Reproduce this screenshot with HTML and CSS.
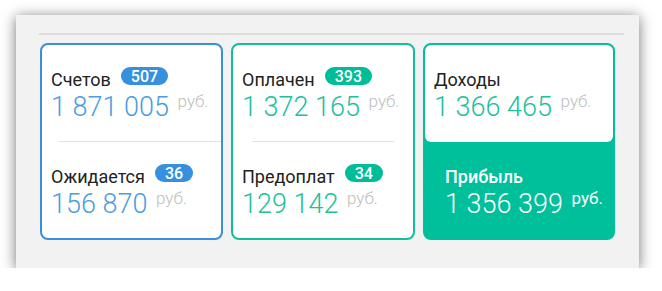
FILE: index.html
```html
<!DOCTYPE html>
<html lang="ru">
<head>
    <meta charset="UTF-8">
    <meta name="viewport" content="width=device-width, initial-scale=1.0">
    <title>Сводка по счетам</title>
    <link rel="stylesheet" href="styles.css">
</head>
<body>
    <div class="panel">
        <hr class="panel-rule">
        <div class="cards">
            <!-- Счета -->
            <div class="card card-blue">
                <div class="stat">
                    <div class="stat-label">Счетов <span class="badge">507</span></div>
                    <div class="stat-value">1 871 005 <span class="cur">руб.</span></div>
                </div>
                <div class="stat stat-second">
                    <div class="stat-label">Ожидается <span class="badge">36</span></div>
                    <div class="stat-value">156 870 <span class="cur">руб.</span></div>
                </div>
            </div>

            <!-- Оплаты -->
            <div class="card card-green">
                <div class="stat">
                    <div class="stat-label">Оплачен <span class="badge">393</span></div>
                    <div class="stat-value">1 372 165 <span class="cur">руб.</span></div>
                </div>
                <div class="stat stat-second">
                    <div class="stat-label">Предоплат <span class="badge">34</span></div>
                    <div class="stat-value">129 142 <span class="cur">руб.</span></div>
                </div>
            </div>

            <!-- Итоги -->
            <div class="card card-total">
                <div class="stat stat-income">
                    <div class="stat-label">Доходы</div>
                    <div class="stat-value">1 366 465 <span class="cur">руб.</span></div>
                </div>
                <div class="stat stat-profit">
                    <div class="stat-label">Прибыль</div>
                    <div class="stat-value">1 356 399 <span class="cur">руб.</span></div>
                </div>
            </div>
        </div>
    </div>
</body>
</html>
```

FILE: styles.css
```css
/* Сводка */
body {
    margin: 0;
    padding: 15px 0 0 16px;
    background-color: #fff;
    font-family: Roboto, "Liberation Sans", sans-serif;
}

.panel {
    width: 623px;
    height: 253px;
    box-sizing: border-box;
    padding: 18px 15px 0 23px;
    background-color: #f2f2f2;
    box-shadow: 0 2px 13px rgba(0, 0, 0, 0.55);
}

.panel-rule {
    margin: 0;
    border: none;
    border-top: 2px solid #dcdcdc;
}

.cards {
    display: flex;
    gap: 8px;
    margin: 8px 0 0 1px;
}

.card {
    box-sizing: border-box;
    height: 197px;
    border: 2px solid;
    border-radius: 8px;
    background-color: #fff;
}

.card-blue {
    width: 183px;
    border-color: #3a8fdc;
}

.card-green {
    width: 184px;
    border-color: #12bf9c;
}

.card-total {
    width: 192px;
    border-color: #00bf9b;
    background-color: #00bf9b;
    display: flex;
    flex-direction: column;
}

.stat {
    height: 96px;
    box-sizing: border-box;
    padding: 24px 9px 0;
}

.stat-second {
    height: 97px;
    border-top: 1px solid #dfe3e7;
}

.card-blue .stat-second {
    margin-left: 17px;
    padding-left: 0;
}

.card-blue .stat-second .stat-label,
.card-blue .stat-second .stat-value {
    margin-left: -8px;
}

.card-green .stat-second {
    margin: 0 19px;
    padding-left: 0;
}

.card-green .stat-second .stat-label,
.card-green .stat-second .stat-value {
    margin-left: -10px;
}

.stat-label {
    display: flex;
    align-items: flex-start;
    gap: 10px;
    height: 22px;
    font-size: 18px;
    line-height: 22px;
    color: #222;
}

.badge {
    height: 18px;
    margin-top: -2px;
    padding: 0 10px;
    border-radius: 9px;
    font-size: 16px;
    font-weight: 500;
    line-height: 19px;
    color: #fff;
}

.card-blue .badge {
    background-color: #3790dd;
}

.card-green .badge {
    background-color: #00bd99;
}

.stat-value {
    margin-top: 1px;
    font-size: 27px;
    font-weight: 300;
    line-height: 30px;
    white-space: nowrap;
}

.card-blue .stat-value {
    color: #4a9de2;
}

.card-green .stat-value,
.stat-income .stat-value {
    color: #22bf9d;
}

.cur {
    margin-left: 2px;
    vertical-align: top;
    font-size: 17px;
    line-height: 18px;
    color: #bdbdbd;
}

.stat-income {
    height: 97px;
    background-color: #fff;
    border-radius: 6px;
}

.stat-profit {
    padding: 24px 20px 0;
}

.stat-profit .stat-label {
    color: #fff;
    font-weight: 500;
}

.stat-profit .stat-value {
    color: #fff;
}

.stat-profit .cur {
    color: #fff;
    font-weight: 400;
}
```
